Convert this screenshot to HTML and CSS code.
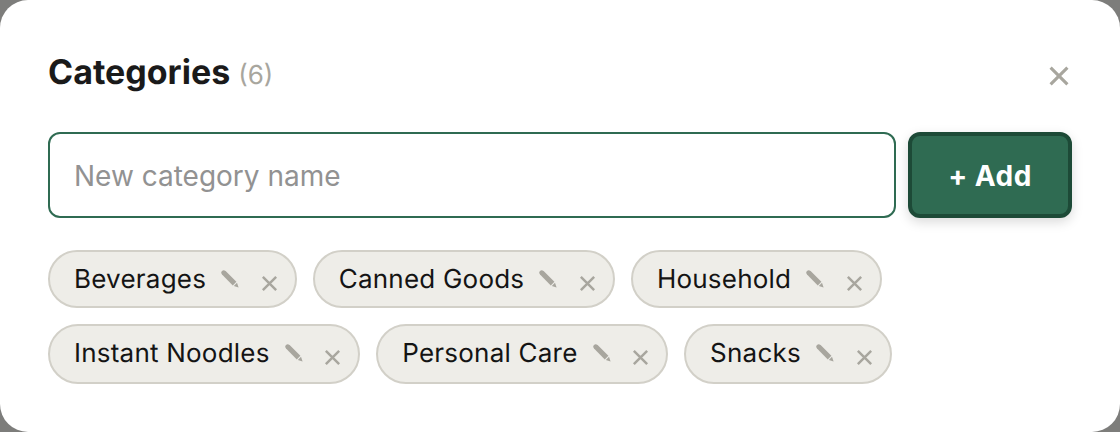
FILE: index.html
```html
<!DOCTYPE html>
<html>
  <head>
    <title>Categories</title>
    <meta charset="utf-8" />
    <link rel="stylesheet" href="styles.css">
  </head>
  <body>
    <svg class="defs" width="0" height="0">
      <symbol id="pencil" viewBox="0 0 20 20">
        <path d="M1.2 4 Q1 3 2 2 Q3 1 4 1.2 L5.6 2 L16.4 12.8 L12.8 16.4 L2 5.6 Z" fill="#a8a69e" />
        <path d="M13.8 17 L17 13.8 L18.6 18.6 Z" fill="#a8a69e" />
      </symbol>
      <symbol id="cross" viewBox="0 0 20 20">
        <path d="M3 3 L17 17 M17 3 L3 17" stroke="#a8a69e" stroke-width="2.6" fill="none" />
      </symbol>
    </svg>
    <div class="modal">
      <div class="modal-head">
        <h2>Categories <span class="count">(6)</span></h2>
        <button class="close" type="button"><svg class="close-icon"><use href="#cross" /></svg></button>
      </div>
      <form class="add-form">
        <input class="name-input" type="text" placeholder="New category name" />
        <button class="add-btn" type="button">+ Add</button>
      </form>
      <div class="chips">
        <div class="chip">
          <span>Beverages</span>
          <svg class="pencil"><use href="#pencil" /></svg>
          <svg class="cross"><use href="#cross" /></svg>
        </div>
        <div class="chip">
          <span>Canned Goods</span>
          <svg class="pencil"><use href="#pencil" /></svg>
          <svg class="cross"><use href="#cross" /></svg>
        </div>
        <div class="chip">
          <span>Household</span>
          <svg class="pencil"><use href="#pencil" /></svg>
          <svg class="cross"><use href="#cross" /></svg>
        </div>
        <div class="chip chip-low">
          <span>Instant Noodles</span>
          <svg class="pencil"><use href="#pencil" /></svg>
          <svg class="cross"><use href="#cross" /></svg>
        </div>
        <div class="chip chip-low">
          <span>Personal Care</span>
          <svg class="pencil"><use href="#pencil" /></svg>
          <svg class="cross"><use href="#cross" /></svg>
        </div>
        <div class="chip chip-low">
          <span>Snacks</span>
          <svg class="pencil"><use href="#pencil" /></svg>
          <svg class="cross"><use href="#cross" /></svg>
        </div>
      </div>
    </div>
  </body>
</html>
```

FILE: styles.css
```css
html,
body {
  margin: 0;
  height: 100%;
}
body {
  background: #7d7d7b;
  font-family: "Inter", "Liberation Sans", sans-serif;
  text-rendering: geometricPrecision;
  overflow: hidden;
}
.defs {
  display: block;
  height: 0;
}
.modal {
  height: 432px;
  box-sizing: border-box;
  background: #fff;
  border-radius: 28px;
  padding: 48px 48px 0;
}
.modal-head {
  display: flex;
  justify-content: space-between;
  align-items: center;
  height: 48px;
  margin-bottom: 36px;
}
.modal-head h2 {
  margin: 0;
  font-size: 34px;
  font-weight: 700;
  color: #1a1a1a;
}
.count {
  font-size: 26px;
  font-weight: 400;
  color: #a8a69e;
}
.close {
  background: none;
  border: none;
  padding: 0;
  margin-right: 1px;
  margin-top: 8px;
  width: 24px;
  height: 24px;
}
.close-icon {
  display: block;
  width: 24px;
  height: 24px;
}
.add-form {
  display: flex;
  gap: 12px;
  margin-bottom: 32px;
}
.name-input {
  flex: 1;
  height: 86px;
  box-sizing: border-box;
  border: 2px solid #2f6b52;
  border-radius: 12px;
  padding: 2px 24px 0;
  font-family: inherit;
  font-size: 28px;
  color: #1a1a1a;
}
.name-input::placeholder {
  color: #929292;
}
.add-btn {
  width: 164px;
  height: 86px;
  box-sizing: border-box;
  background: #2f6b52;
  border: 4px solid #1d4a37;
  border-radius: 12px;
  padding: 2px 0 0;
  color: #fff;
  font-family: inherit;
  font-size: 28px;
  font-weight: 700;
  letter-spacing: 0.5px;
  box-shadow: 0 4px 12px rgba(0, 0, 0, 0.15);
}
.chips {
  display: flex;
  flex-wrap: wrap;
  gap: 16px;
}
.chip {
  display: flex;
  align-items: center;
  height: 58px;
  box-sizing: border-box;
  background: #eeede8;
  border: 2px solid #d2d0c8;
  border-radius: 30px;
  padding: 0 16px 0 24px;
  font-size: 26px;
  font-weight: 400;
  letter-spacing: 0.22px;
  color: #141414;
}
.chip-low {
  height: 60px;
  padding-bottom: 2px;
}
.pencil {
  width: 20px;
  height: 20px;
  margin-left: 14px;
}
.cross {
  width: 19px;
  height: 19px;
  margin-left: 19.6px;
  margin-top: 8px;
}
```
